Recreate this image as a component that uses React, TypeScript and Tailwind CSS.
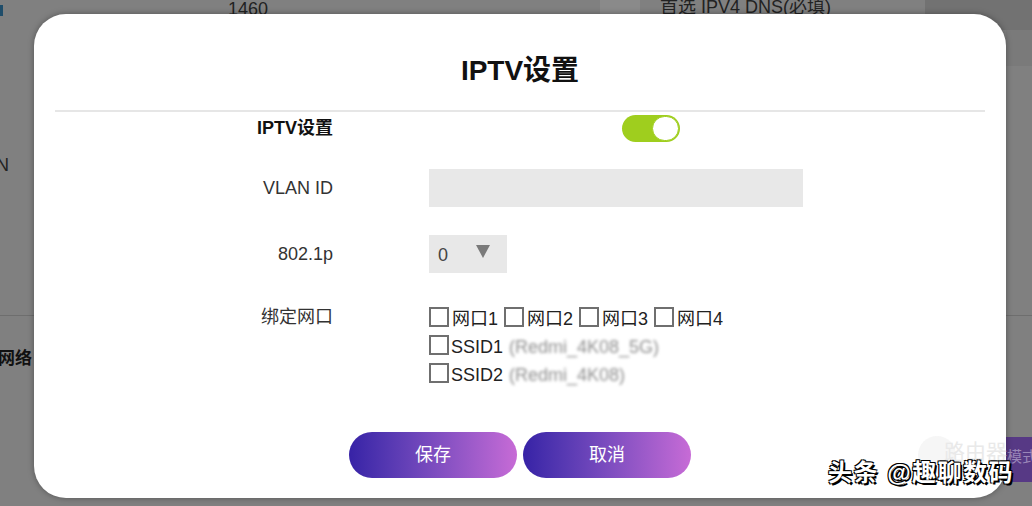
import { useState } from 'react';

const FONT = '"Liberation Sans", "Noto Sans CJK SC", sans-serif';

const PORTS = ['网口1', '网口2', '网口3', '网口4'];

function Box({ checked, onClick }: { checked: boolean; onClick: () => void }) {
  return (
    <span
      onClick={onClick}
      className="inline-block w-[20px] h-[20px] border-2 border-[#6f6f6f] bg-white shrink-0 cursor-pointer"
    >
      {checked && <span className="block w-full h-full bg-[#6f6f6f]" />}
    </span>
  );
}

function Toggle({ on, onChange }: { on: boolean; onChange: () => void }) {
  return (
    <button
      onClick={onChange}
      className={`w-[58px] h-[27px] rounded-full p-[1px] flex items-center ${on ? 'bg-[#9fce1e] justify-end' : 'bg-[#d0d0d0] justify-start'}`}
    >
      <span className="w-[27px] h-[25px] rounded-full bg-white border-[1.5px] border-[#9fce1e]" />
    </button>
  );
}

function Backdrop() {
  // dimmed router page behind the dialog
  return (
    <div className="absolute inset-0 bg-[#808080] overflow-hidden">
      <div className="absolute left-0 top-[5px] w-[3px] h-[11px] bg-[#1f4d6a]" />
      <div className="absolute left-[228px] top-[-4px] text-[18px] text-[#222]">1460</div>
      <div className="absolute left-[600px] top-0 w-[40px] h-[14px] bg-[#8a8a8a]" />
      <div className="absolute left-[660px] top-[-6px] text-[18px] text-[#222] whitespace-nowrap">首选 IPV4 DNS(必填)</div>
      <div className="absolute left-[925px] top-0 right-0 h-[30px] bg-[#727272]" />
      <div className="absolute left-[1006px] top-[30px] right-0 h-[36px] bg-[#7a7a7a]" />
      <div className="absolute left-[-4px] top-[152px] text-[18px] text-[#222]">N</div>
      <div className="absolute left-0 right-0 top-[315px] h-[1px] bg-[#6e6e6e]" />
      <div className="absolute left-[-2px] top-[346px] text-[17px] font-bold text-[#111] whitespace-nowrap">网络</div>
      <div className="absolute left-[1006px] top-[437px] right-0 h-[45px] bg-[#573985] text-[#9a86b8] text-[15px] leading-[40px] pl-[1px] whitespace-nowrap overflow-hidden">
        模式
      </div>
    </div>
  );
}

export default function App() {
  const [enabled, setEnabled] = useState(true);
  const [ports, setPorts] = useState([false, false, false, false]);
  const [ssids, setSsids] = useState([false, false]);

  return (
    <div className="relative w-[1032px] h-[506px] overflow-hidden" style={{ fontFamily: FONT }}>
      <Backdrop />

      <div className="absolute left-[34px] top-[14px] w-[972px] h-[484px] bg-white rounded-[32px] shadow-[0_0_6px_rgba(0,0,0,0.35)] flex flex-col">
        <h1 className="h-[96px] pt-[40px] text-center text-[28px] font-bold text-[#111] leading-[34px]">
          IPTV设置
        </h1>
        <div className="mx-[21px] h-[2px] bg-[#e6e6e6]" />

        <div className="flex flex-col text-[18px] text-[#333]">
          <div className="flex items-center h-[32px]">
            <div className="w-[299px] text-right font-bold text-[#111]">IPTV设置</div>
            <div className="ml-[289px]">
              <Toggle on={enabled} onChange={() => setEnabled(!enabled)} />
            </div>
          </div>

          <div className="flex items-center h-[38px] mt-[25px]">
            <div className="w-[299px] text-right">VLAN ID</div>
            <input className="ml-[96px] w-[374px] h-[38px] bg-[#e8e8e8] outline-none px-2" />
          </div>

          <div className="flex items-center h-[38px] mt-[28px]">
            <div className="w-[299px] text-right">802.1p</div>
            <div className="ml-[96px] w-[78px] h-[38px] bg-[#e8e8e8] flex items-center pl-[9px] gap-[28px]">
              <span className="text-[#444] pt-[3px]">0</span>
              <svg width="14" height="13" viewBox="0 0 14 13" className="mt-[-6px]">
                <path d="M0 0 H14 L7 13 Z" fill="#7a7a7a" />
              </svg>
            </div>
          </div>

          <div className="flex mt-[30px]">
            <div className="w-[299px] text-right leading-[28px]">绑定网口</div>
            <div className="ml-[96px] flex flex-col text-[#222]">
              <div className="flex items-center h-[28px]">
                {PORTS.map((p, i) => (
                  <span key={p} className="flex items-center mr-[6px]">
                    <Box
                      checked={ports[i]}
                      onClick={() => setPorts(ports.map((v, j) => (j === i ? !v : v)))}
                    />
                    <span className="ml-[3px] pt-[4px]">{p}</span>
                  </span>
                ))}
              </div>
              {['SSID1', 'SSID2'].map((s, i) => (
                <div key={s} className="flex items-center h-[28px]">
                  <Box
                    checked={ssids[i]}
                    onClick={() => setSsids(ssids.map((v, j) => (j === i ? !v : v)))}
                  />
                  <span className="ml-[2px] pt-[4px]">{s}</span>
                  <span className="ml-[6px] pt-[4px] text-[#8f8f8f] blur-[1.5px] select-none">
                    {i === 0 ? '(Redmi_4K08_5G)' : '(Redmi_4K08)'}
                  </span>
                </div>
              ))}
            </div>
          </div>
        </div>

        <div className="flex justify-center gap-[6px] mt-[45px]">
          <button className="w-[168px] h-[46px] rounded-full bg-gradient-to-r from-[#3722a6] to-[#c76bd6] text-white text-[18px]">
            保存
          </button>
          <button className="w-[168px] h-[46px] rounded-full bg-gradient-to-r from-[#3722a6] to-[#c76bd6] text-white text-[18px]">
            取消
          </button>
        </div>
      </div>

      {/* publisher watermark */}
      <div className="absolute left-[918px] top-[436px] w-[38px] h-[38px] rounded-full bg-[#e8e8e8]/40" />
      <div className="absolute left-[944px] top-[436px] text-[21px] text-[#e9e9e9] whitespace-nowrap">路由器</div>
      <div className="absolute left-[828px] top-[455px] text-[24px] font-bold text-white tracking-[1.5px] whitespace-nowrap [text-shadow:2px_2px_0_#000,-1px_-1px_0_#000,1px_-1px_0_#000,-1px_1px_0_#000]">
        头条 @趣聊数码
      </div>
    </div>
  );
}
